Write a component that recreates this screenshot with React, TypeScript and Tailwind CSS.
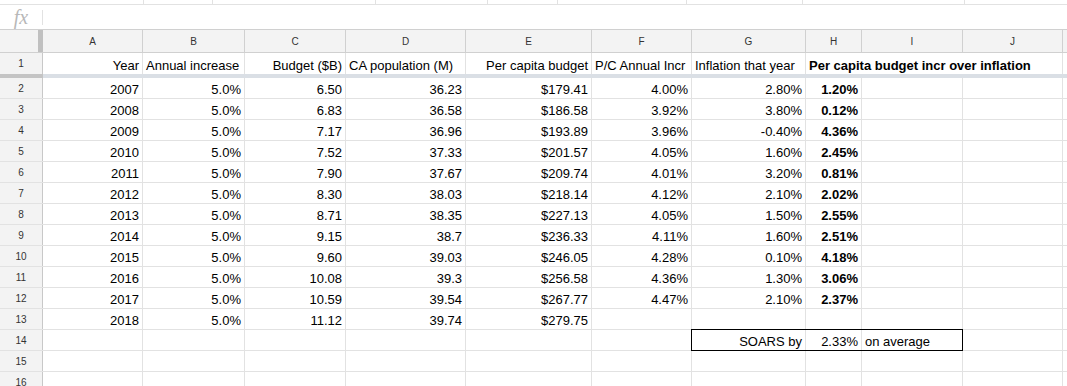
import React from "react"

const cols = [
  { key: "A", w: "w-[100px]" },
  { key: "B", w: "w-[102px]" },
  { key: "C", w: "w-[101px]" },
  { key: "D", w: "w-[120px]" },
  { key: "E", w: "w-[126px]" },
  { key: "F", w: "w-[100px]" },
  { key: "G", w: "w-[114px]" },
  { key: "H", w: "w-[56px]" },
  { key: "I", w: "w-[101px]" },
  { key: "J", w: "w-[100px]" },
]

const data = [
  ["2007", "5.0%", "6.50", "36.23", "$179.41", "4.00%", "2.80%", "1.20%"],
  ["2008", "5.0%", "6.83", "36.58", "$186.58", "3.92%", "3.80%", "0.12%"],
  ["2009", "5.0%", "7.17", "36.96", "$193.89", "3.96%", "-0.40%", "4.36%"],
  ["2010", "5.0%", "7.52", "37.33", "$201.57", "4.05%", "1.60%", "2.45%"],
  ["2011", "5.0%", "7.90", "37.67", "$209.74", "4.01%", "3.20%", "0.81%"],
  ["2012", "5.0%", "8.30", "38.03", "$218.14", "4.12%", "2.10%", "2.02%"],
  ["2013", "5.0%", "8.71", "38.35", "$227.13", "4.05%", "1.50%", "2.55%"],
  ["2014", "5.0%", "9.15", "38.7", "$236.33", "4.11%", "1.60%", "2.51%"],
  ["2015", "5.0%", "9.60", "39.03", "$246.05", "4.28%", "0.10%", "4.18%"],
  ["2016", "5.0%", "10.08", "39.3", "$256.58", "4.36%", "1.30%", "3.06%"],
  ["2017", "5.0%", "10.59", "39.54", "$267.77", "4.47%", "2.10%", "2.37%"],
  ["2018", "5.0%", "11.12", "39.74", "$279.75", "", "", ""],
]

// row 1 labels; some are left aligned in the sheet
const headers: { text: string; align: "left" | "right" }[] = [
  { text: "Year", align: "right" },
  { text: "Annual increase", align: "left" },
  { text: "Budget ($B)", align: "right" },
  { text: "CA population (M)", align: "left" },
  { text: "Per capita budget", align: "right" },
  { text: "P/C Annual Incr", align: "left" },
  { text: "Inflation that year", align: "left" },
]

function Cell({ w, children, align = "right", bold = false }: { w: string; children?: React.ReactNode; align?: "left" | "right"; bold?: boolean }) {
  return (
    <div className={`${w} shrink-0 h-full border-r border-[#e2e2e2] flex items-end pb-[1px] px-[3px] overflow-visible whitespace-nowrap ${align === "right" ? "justify-end" : "justify-start"}`}>
      <span className={`leading-[14px] ${bold ? "font-bold" : ""}`}>{children}</span>
    </div>
  )
}

function RowNum({ n }: { n: number }) {
  return (
    <div className="w-[43px] shrink-0 h-full bg-[#f3f3f3] border-r border-[#c8c8c8] flex items-center justify-center text-[10px] text-[#333]">
      {n}
    </div>
  )
}

export default function App() {
  return (
    <div className="w-[1067px] h-[386px] overflow-hidden bg-white text-[13px] text-black font-['Liberation_Sans',Arial,sans-serif]">
      {/* toolbar remnants */}
      <div className="flex h-[5px] border-b border-[#e2e2e2]">
        <div className="w-[144px] border-r border-[#e2e2e2]" />
        <div className="w-[69px] border-r border-[#e2e2e2]" />
        <div className="w-[163px] border-r border-[#e2e2e2]" />
        <div className="w-[112px] border-r border-[#e2e2e2]" />
        <div className="w-[70px] border-r border-[#e2e2e2]" />
        <div className="w-[129px] border-r border-[#e2e2e2]" />
        <div className="w-[116px] border-r border-[#e2e2e2]" />
        <div className="w-[162px] border-r border-[#e2e2e2]" />
      </div>

      {/* formula bar */}
      <div className="flex items-center h-[24px]">
        <div className="w-[42px] flex justify-center">
          <span className="font-['Liberation_Serif',serif] italic text-[20px] leading-none text-[#b8b8b8]">fx</span>
        </div>
        <div className="w-px h-[15px] bg-[#e2e2e2]" />
      </div>

      {/* column letters */}
      <div className="flex h-[24px] bg-[#f3f3f3] border-y border-[#d0d0d0]">
        <div className="w-[43px] shrink-0 h-full border-r-[5px] border-[#c0c0c0]" />
        {cols.map((c) => (
          <div key={c.key} className={`${c.w} shrink-0 h-full border-r border-[#d0d0d0] flex items-center justify-center text-[10px] text-[#333]`}>
            {c.key}
          </div>
        ))}
      </div>

      {/* row 1 */}
      <div className="flex h-[21px]">
        <RowNum n={1} />
        {headers.map((h, i) => (
          <Cell key={i} w={cols[i].w} align={h.align}>{h.text}</Cell>
        ))}
        <Cell w="w-[257px]" align="left" bold>Per capita budget incr over inflation</Cell>
      </div>

      {/* freeze line */}
      <div className="flex h-[4px]">
        <div className="w-[43px] bg-[#c4c4c4]" />
        <div className="flex-1 bg-[#dadfe5]" />
      </div>

      {data.map((row, r) => (
        <div key={r} className="flex h-[21px] border-b border-[#e2e2e2]">
          <RowNum n={r + 2} />
          {cols.map((c, i) => (
            <Cell key={c.key} w={c.w} bold={i === 7}>{row[i] ?? ""}</Cell>
          ))}
        </div>
      ))}

      {/* row 14 */}
      <div className="flex h-[21px] border-b border-[#e2e2e2]">
        <RowNum n={14} />
        {cols.slice(0, 6).map((c) => (
          <Cell key={c.key} w={c.w} />
        ))}
        <div className="relative flex h-full">
          <Cell w={cols[6].w}>SOARS by</Cell>
          <Cell w={cols[7].w}>2.33%</Cell>
          <Cell w={cols[8].w} align="left">on average</Cell>
          <div className="absolute -top-px -left-px right-0 -bottom-px border border-black pointer-events-none" />
        </div>
        <Cell w={cols[9].w} />
      </div>

      {[15, 16].map((n) => (
        <div key={n} className="flex h-[21px] border-b border-[#e2e2e2]">
          <RowNum n={n} />
          {cols.map((c) => (
            <Cell key={c.key} w={c.w} />
          ))}
        </div>
      ))}
    </div>
  )
}
